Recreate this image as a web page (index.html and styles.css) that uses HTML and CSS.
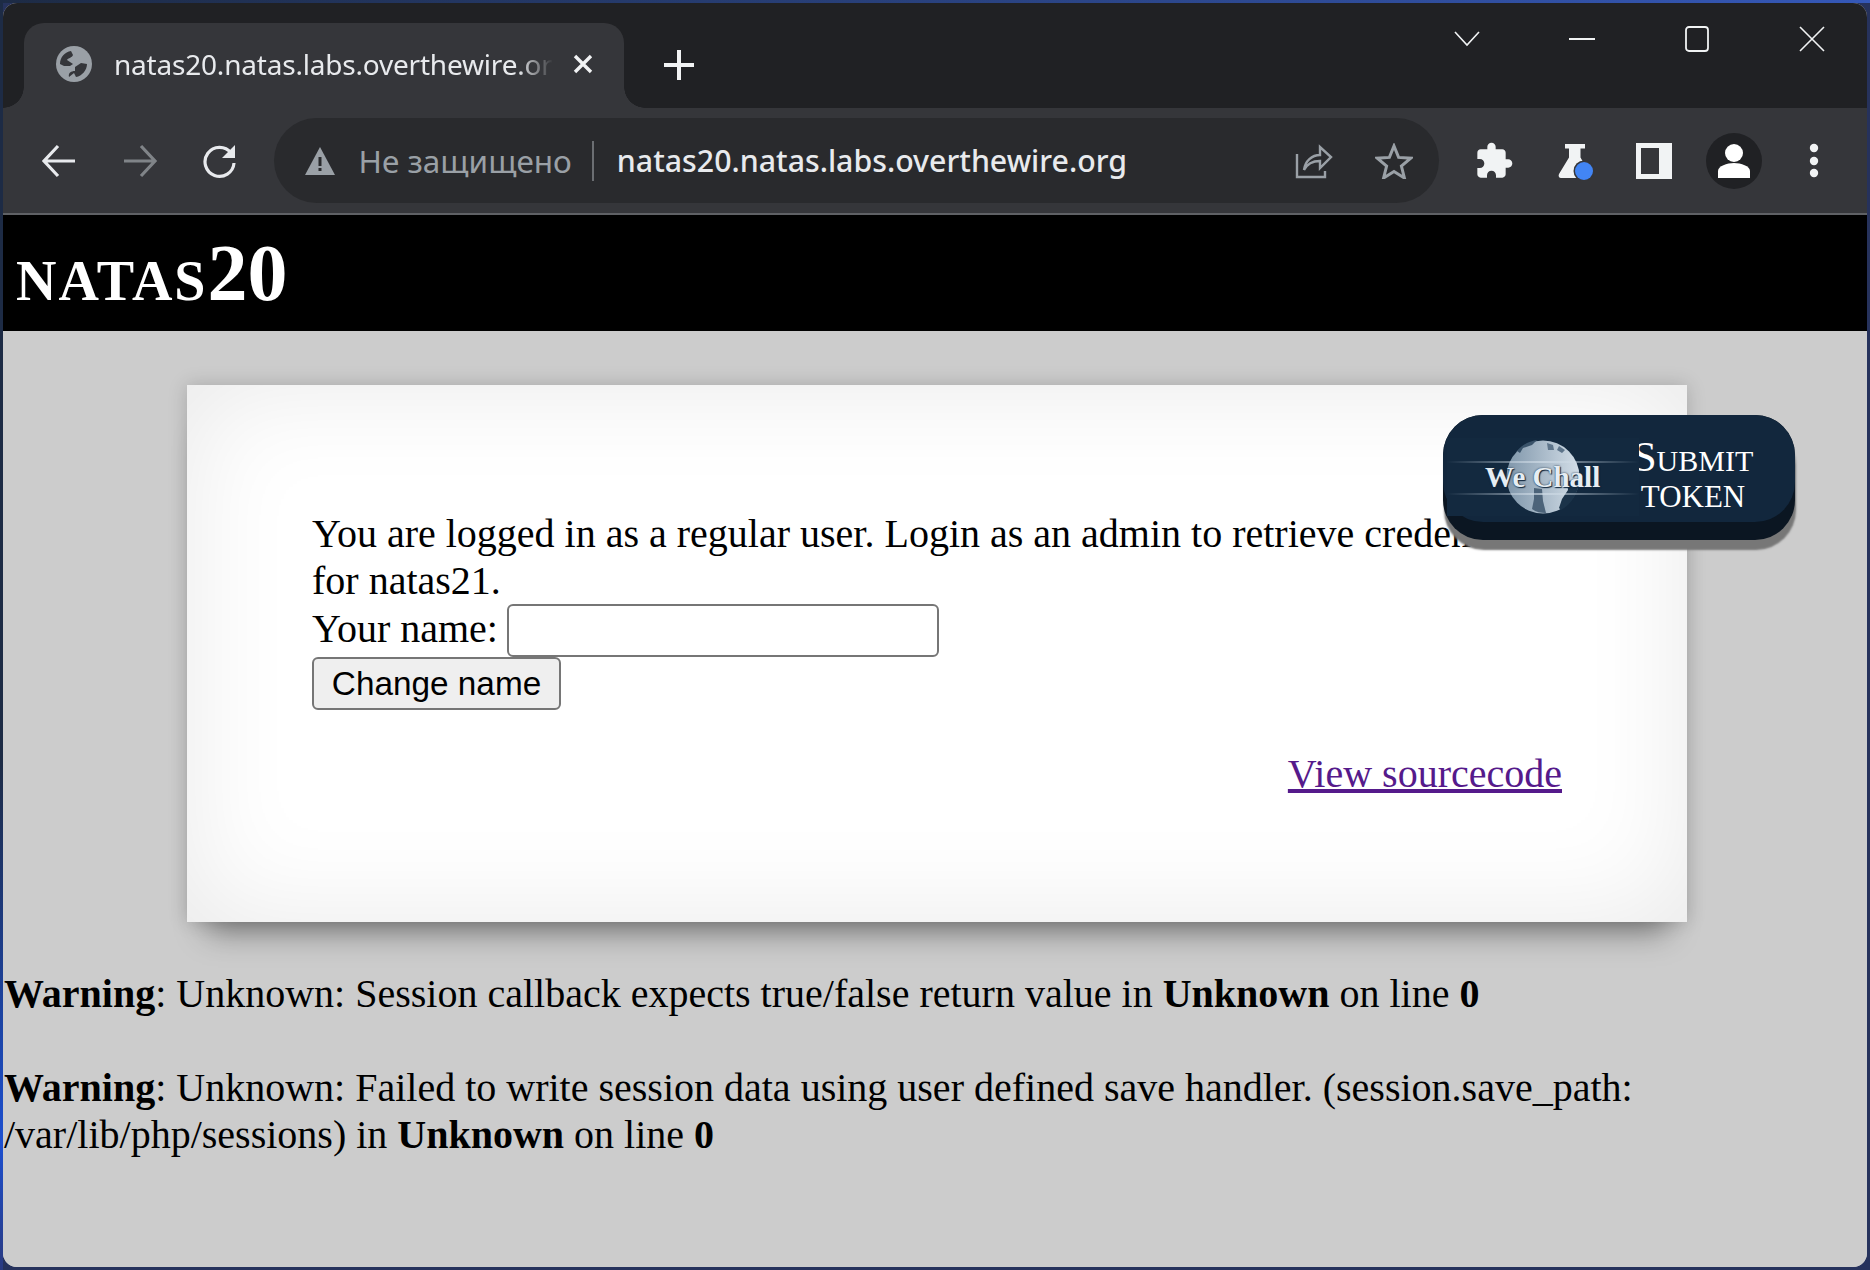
FILE: index.html
```html
<!DOCTYPE html>
<html lang="en">
<head>
    <meta charset="UTF-8">
    <title>natas20.natas.labs.overthewire.org</title>
    <link rel="stylesheet" href="styles.css">
</head>
<body>
    <div class="window">
        <div class="tabstrip">
            <div class="tab">
                <svg class="favicon" width="36" height="36" viewBox="0 0 36 36">
                    <circle cx="18" cy="18" r="18" fill="#9aa0a6"/>
                    <path d="M4 18C4 11 9 6 15 5l2 4c-1 3-5 3-6 5l6 4-3 2H8z" fill="#35363a"/>
                    <path d="M13 31c-1-4 2-6 6-6v-4l6-4 6 1c0 6-5 12-11 13l-2-4z" fill="#35363a"/>
                </svg>
                <span class="tab-title">natas20.natas.labs.overthewire.org</span>
                <svg class="tab-close" width="20" height="20" viewBox="0 0 20 20">
                    <path d="M2 2l16 16M18 2L2 18" stroke="#f1f3f4" stroke-width="3.4"/>
                </svg>
            </div>
            <svg class="new-tab" width="30" height="30" viewBox="0 0 30 30">
                <path d="M15 0v30M0 15h30" stroke="#f1f3f4" stroke-width="4"/>
            </svg>
            <div class="window-controls">
                <span class="win-btn">
                    <svg width="26" height="16" viewBox="0 0 26 16"><path d="M1 1l12 13L25 1" fill="none" stroke="#f1f3f4" stroke-width="1.6"/></svg>
                </span>
                <span class="win-btn">
                    <svg width="26" height="4" viewBox="0 0 26 4"><path d="M0 2h26" stroke="#f1f3f4" stroke-width="2"/></svg>
                </span>
                <span class="win-btn">
                    <svg width="26" height="26" viewBox="0 0 26 26"><rect x="2" y="1" width="22" height="24" rx="3" fill="none" stroke="#f1f3f4" stroke-width="1.8"/></svg>
                </span>
                <span class="win-btn">
                    <svg width="26" height="26" viewBox="0 0 26 26"><path d="M1 1l24 24M25 1L1 25" stroke="#f1f3f4" stroke-width="1.6"/></svg>
                </span>
            </div>
        </div>

        <div class="toolbar">
            <span class="tool-btn">
                <svg width="36" height="36" viewBox="0 0 36 36"><path d="M34 18H4M17 3L3 18l14 15" fill="none" stroke="#e8eaed" stroke-width="3.2"/></svg>
            </span>
            <span class="tool-btn">
                <svg width="36" height="36" viewBox="0 0 36 36"><path d="M2 18h30M19 3l14 15-14 15" fill="none" stroke="#808488" stroke-width="3.2"/></svg>
            </span>
            <span class="tool-btn">
                <svg width="36" height="36" viewBox="0 0 36 36"><path d="M29 10A14.5 14.5 0 1 0 32 20" fill="none" stroke="#e8eaed" stroke-width="3.2"/><path d="M33 2v13H20z" fill="#e8eaed"/></svg>
            </span>
            <div class="omnibox">
                <svg class="warn-icon" width="32" height="30" viewBox="0 0 32 30">
                    <path d="M16 1l15 28H1z" fill="#9aa0a6"/>
                    <path d="M14.5 11h3v9h-3zM14.500 22h3v3h-3z" fill="#292a2d"/>
                </svg>
                <span class="not-secure">Не защищено</span>
                <span class="omni-divider"></span>
                <span class="url">natas20.natas.labs.overthewire.org</span>
                <svg class="omni-icon share" width="38" height="36" viewBox="0 0 38 36">
                    <path d="M2 11v23h28v-6" fill="none" stroke="#9aa0a6" stroke-width="2.4"/>
                    <path d="M9 27c1-9 8-15 16-15V4l11 10-11 11v-7c-7 0-13 3-16 9z" fill="none" stroke="#9aa0a6" stroke-width="2.4"/>
                </svg>
                <svg class="omni-icon star" width="38" height="36" viewBox="0 0 38 36">
                    <path d="M19 3l4.600 11.400 12.200.8-9.400 7.800 3 12L19 28.500l-10.400 6.500 3-12-9.400-7.800 12.200-.8z" fill="none" stroke="#9aa0a6" stroke-width="3"/>
                </svg>
            </div>
            <div class="extensions">
                <span class="ext-btn">
                    <svg width="40" height="40" viewBox="0 0 24 24"><path fill="#f1f3f4" d="M20.500 11H19V7c0-1.100-.9-2-2-2h-4V3.500C13 2.120 11.880 1 10.500 1S8 2.120 8 3.500V5H4c-1.100 0-1.990.9-1.990 2v3.800H3.500c1.490 0 2.700 1.210 2.700 2.700s-1.210 2.700-2.700 2.700H2V20c0 1.100.9 2 2 2h3.800v-1.500c0-1.490 1.210-2.700 2.700-2.700 1.490 0 2.700 1.210 2.700 2.700V22H17c1.100 0 2-.9 2-2v-4h1.500c1.380 0 2.500-1.120 2.500-2.500S21.880 11 20.500 11z"/></svg>
                </span>
                <span class="ext-btn">
                    <svg width="40" height="40" viewBox="0 0 40 40">
                        <path d="M11 3h20v4.500h-4.500v9L36 33c1 2 0 4-2 4H7c-2 0-3-2-2-4l10-16.500v-9H11z" fill="#f1f3f4"/>
                        <circle cx="30" cy="30" r="10.500" fill="#35363a"/>
                        <circle cx="30" cy="30" r="9" fill="#4285f4"/>
                    </svg>
                </span>
                <span class="ext-btn">
                    <svg width="36" height="36" viewBox="0 0 36 36"><path d="M0 0h36v36H0z" fill="#f1f3f4"/><path d="M5 5h18v26H5z" fill="#35363a"/></svg>
                </span>
                <span class="ext-btn">
                    <span class="avatar">
                        <svg width="34" height="36" viewBox="0 0 34 36"><circle cx="17" cy="10" r="9" fill="#fff"/><path d="M1 35v-7c0-5 9-8 16-8s16 3 16 8v7z" fill="#fff"/></svg>
                    </span>
                </span>
                <span class="ext-btn">
                    <svg width="10" height="36" viewBox="0 0 10 36"><circle cx="5" cy="5" r="4.200" fill="#f1f3f4"/><circle cx="5" cy="18" r="4.200" fill="#f1f3f4"/><circle cx="5" cy="30" r="4.200" fill="#f1f3f4"/></svg>
                </span>
            </div>
        </div>

        <div class="page">
            <h1 class="site-title"><span class="site-name">natas</span>20</h1>
            <div class="content">
                You are logged in as a regular user. Login as an admin to retrieve credentials for natas21.
                <form class="name-form">
                    Your name: <input type="text" class="name-input"><br>
                    <button type="button" class="name-submit">Change name</button>
                </form>
                <div class="source-link"><a href="#">View sourcecode</a></div>
            </div>

            <div class="warnings">
                <b>Warning</b>: Unknown: Session callback expects true/false return value in <b>Unknown</b> on line <b>0</b><br>
                <br>
                <b>Warning</b>: Unknown: Failed to write session data using user defined save handler. (session.save_path: /var/lib/php/sessions) in <b>Unknown</b> on line <b>0</b>
            </div>

            <div class="wechall">
                <div class="wechall-face">
                    <div class="wechall-logo">
                        <svg width="192" height="78" viewBox="0 0 192 78">
                            <defs>
                                <linearGradient id="streak" x1="0" x2="1" y1="0" y2="0">
                                    <stop offset="0" stop-color="#cfdbe6" stop-opacity="0"/>
                                    <stop offset=".5" stop-color="#cfdbe6" stop-opacity=".7"/>
                                    <stop offset="1" stop-color="#cfdbe6" stop-opacity="0"/>
                                </linearGradient>
                                <linearGradient id="land" x1="0" x2="1" y1="0" y2="0">
                                    <stop offset="0" stop-color="#7f96aa"/>
                                    <stop offset="1" stop-color="#d3dee8"/>
                                </linearGradient>
                            </defs>
                            <rect width="192" height="78" fill="#13293f"/>
                            <circle cx="96" cy="39" r="36.500" fill="url(#land)"/>
                            <path d="M70 13c5-6 12-10 20-11l-5 5-9 3-3 5z" fill="#3a536a"/>
                            <path d="M100 5l6 2 1 5-6 0zM112 8l6 4-3 3-5-3z" fill="#5d748a"/>
                            <path d="M87 50l8 1 1 12 3 12c-5 0-10-1-14-4l2-10z" fill="#4c6379"/>
                            <path d="M132 42c0 12-7 24-18 30l-2-2 3-9 6-9-1-9z" fill="#1b3349"/>
                            <rect y="23" width="192" height="2" fill="url(#streak)"/>
                            <rect y="55" width="192" height="2" fill="url(#streak)"/>
                        </svg>
                        <span class="wechall-name">We Chall</span>
                    </div>
                    <div class="wechall-label">
                        <span class="label-submit">Submit</span>
                        <span class="label-token">token</span>
                    </div>
                </div>
            </div>
        </div>
    </div>
</body>
</html>
```

FILE: styles.css
```css
* {
    box-sizing: border-box;
}

html, body {
    margin: 0;
    height: 100%;
}

body {
    padding: 3px;
    overflow: hidden;
    background:
        linear-gradient(90deg, #1d2b45, #3558b8) top / 100% 3px no-repeat,
        linear-gradient(180deg, #1d2b45 0%, #1d2b45 60%, #1c4fd0 90%, #2a3a80 100%) left / 3px 100% no-repeat,
        #26325c;
}

.window {
    height: 100%;
    display: flex;
    flex-direction: column;
    border-radius: 14px;
    overflow: hidden;
    background: #ccc;
}

/* browser chrome */
.tabstrip {
    height: 105px;
    flex: none;
    display: flex;
    align-items: flex-start;
    padding-left: 21px;
    background: #202124;
}

.tab {
    position: relative;
    width: 600px;
    height: 85px;
    margin-top: 20px;
    padding: 0 31px 3px 32px;
    display: flex;
    align-items: center;
    flex: none;
    background: #35363a;
    border-radius: 20px 20px 0 0;
}

.tab::before, .tab::after {
    content: "";
    position: absolute;
    bottom: 0;
    width: 21px;
    height: 21px;
}

.tab::before {
    left: -21px;
    background: radial-gradient(circle at 0 0, transparent 20.5px, #35363a 21px);
}

.tab::after {
    right: -21px;
    background: radial-gradient(circle at 100% 0, transparent 20.5px, #35363a 21px);
}

.favicon {
    flex: none;
}

.tab-title {
    width: 440px;
    margin-left: 22px;
    overflow: hidden;
    white-space: nowrap;
    font: 28px "Noto Sans", sans-serif;
    letter-spacing: -.2px;
    color: #e8eaed;
    -webkit-mask-image: linear-gradient(90deg, #000 92%, transparent 100%);
    mask-image: linear-gradient(90deg, #000 92%, transparent 100%);
}

.tab-close {
    flex: none;
    margin-left: 20px;
}

.new-tab {
    flex: none;
    margin: 47px 0 0 40px;
}

.window-controls {
    margin-left: auto;
    margin-right: -2px;
    display: flex;
}

.win-btn {
    width: 115px;
    height: 72px;
    display: flex;
    align-items: center;
    justify-content: center;
}

.toolbar {
    height: 107px;
    flex: none;
    display: flex;
    align-items: center;
    padding-left: 16px;
    background: #35363a;
    border-bottom: 2px solid #5f6165;
}

.tool-btn {
    width: 80.500px;
    flex: none;
    display: flex;
    align-items: center;
    justify-content: center;
}

.extensions {
    margin-left: 15px;
    display: flex;
    flex: none;
}

.ext-btn {
    width: 80px;
    display: flex;
    align-items: center;
    justify-content: center;
}

.omnibox {
    width: 1165px;
    height: 85px;
    margin-left: 13px;
    padding-left: 30px;
    flex: none;
    display: flex;
    align-items: center;
    background: #292a2d;
    border-radius: 43px;
    font: 30.300px "Noto Sans", sans-serif;
}

.warn-icon {
    flex: none;
}

.not-secure {
    margin-left: 23px;
    font-size: 31.500px;
    color: #9aa0a6;
}

.omni-divider {
    width: 2px;
    height: 40px;
    margin: 0 23px 0 20px;
    background: #6b6e72;
}

.url {
    color: #e8eaed;
    font-weight: 500;
}

.omni-icon {
    flex: none;
}

.share {
    margin-left: auto;
}

.star {
    margin: 0 26px 0 42px;
}

.avatar {
    width: 56px;
    height: 56px;
    display: flex;
    align-items: center;
    justify-content: center;
    background: #202124;
    border-radius: 50%;
}

/* the natas page */
.page {
    position: relative;
    flex: 1;
    background: #ccc;
    font: 40px "Liberation Serif", serif;
    color: #000;
}

.site-title {
    margin: 0;
    height: 116px;
    padding: 13px 13px;
    background: #000;
    color: #fff;
    font: bold 80px "Liberation Serif", serif;
    font-variant: small-caps;
}

.site-name {
    letter-spacing: 2px;
}

.content {
    width: 1500px;
    height: 537px;
    margin: 54px 0 0 184px;
    padding: 125px;
    background: #fff;
    box-shadow: 0 0 18px rgba(0, 0, 0, .18), 0 30px 30px -20px rgba(0, 0, 0, .4), inset 0 0 110px rgba(0, 0, 0, .09);
}

.name-form {
    margin: 0;
}

.name-input {
    width: 432px;
    height: 53px;
    margin: 0 0 0 -1px;
    padding: 2px 5px;
    border: 2.500px solid #767676;
    border-radius: 6px;
    background: #fff;
    vertical-align: 7px;
}

.name-submit {
    width: 249px;
    height: 53px;
    padding: 0;
    border: 2.500px solid #767676;
    border-radius: 6px;
    background: #efefef;
    font: 33.330px "Liberation Sans", sans-serif;
    color: #000;
}

.source-link {
    margin-top: 40px;
    text-align: right;
}

.source-link a {
    color: #551a8b;
}

.warnings {
    margin-top: 48px;
    padding-left: 1px;
}

/* submit token badge */
.wechall {
    position: absolute;
    top: 200px;
    right: 72px;
    width: 352px;
    height: 125px;
    background: #0b1622;
    border-radius: 40px;
    box-shadow: 1px 10px 2px #777;
}

.wechall-face {
    height: 107px;
    padding-left: 4px;
    display: flex;
    align-items: center;
    background: #12273d;
    border-radius: 40px;
}

.wechall-logo {
    position: relative;
    width: 192px;
    height: 78px;
    margin-top: 17px;
    flex: none;
}

.wechall-logo svg {
    display: block;
}

.wechall-name {
    position: absolute;
    left: 38px;
    top: 22px;
    font: bold 29px/34px "Liberation Serif", serif;
    white-space: nowrap;
    color: #e6edf3;
    text-shadow: 0 0 2px #13293f, 1px 1px 1px #13293f;
}

.wechall-label {
    width: 118px;
    margin: 12px 0 0 -5px;
    display: flex;
    flex-direction: column;
    align-items: center;
    font-family: "Liberation Serif", serif;
    font-variant: small-caps;
    color: #fff;
    line-height: 36px;
}

.label-submit {
    font-size: 43px;
}

.label-token {
    font-size: 44px;
}
```
